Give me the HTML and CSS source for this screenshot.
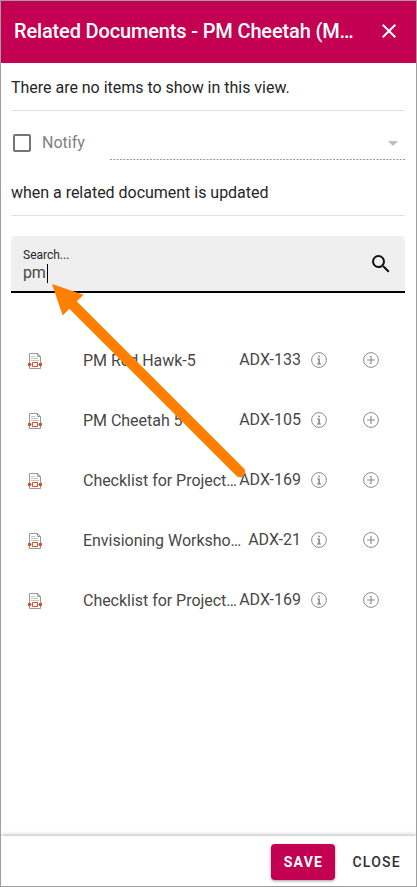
FILE: index.html
```html
<!DOCTYPE html>
<html lang="en">
<head>
<meta charset="utf-8">
<title>Related Documents</title>
<link rel="stylesheet" href="styles.css">
</head>
<body>
<svg class="defs" width="0" height="0">
  <symbol id="doc" viewBox="0 0 14 16">
    <path d="M1.5 .5h8l3 3v12h-11z" fill="#fff" stroke="#979797"/>
    <path d="M9.5 .5v3h3" fill="none" stroke="#979797"/>
    <path d="M3 3.5h4M3 5.5h7M3 7.5h8" stroke="#c4c4c4"/>
    <path d="M0 11.5h14" stroke="#d9a699"/>
    <path d="M0 10h3v3H0zM11 10h3v3h-3z" fill="#d35230"/>
    <path d="M4.5 9.5h5v4h-5z" fill="#fff" stroke="#d35230"/>
  </symbol>
  <symbol id="info" viewBox="0 0 16 16">
    <circle cx="8" cy="8" r="7.4" fill="none" stroke="#8c8c8c" stroke-width="1"/>
    <path d="M7.3 3.8h1.5v1.5H7.3zM6.2 6.5h2.6v5h1.2v.9H6.1v-.9h1.3V7.4H6.2z" fill="#777"/>
  </symbol>
  <symbol id="add" viewBox="0 0 16 16">
    <circle cx="8" cy="8" r="7.4" fill="none" stroke="#8c8c8c" stroke-width="1"/>
    <path d="M4 8h8M8 4v8" stroke="#8c8c8c" stroke-width="1.2"/>
  </symbol>
</svg>
<div class="panel">
  <header class="header">
    <h1 class="title">Related Documents - PM Cheetah (M…</h1>
    <svg class="close-icon" viewBox="0 0 24 24"><path d="M19 6.41 17.59 5 12 10.59 6.41 5 5 6.41 10.59 12 5 17.59 6.41 19 12 13.41 17.59 19 19 17.59 13.41 12z"/></svg>
  </header>
  <main class="content">
    <p class="line first">There are no items to show in this view.</p>
    <div class="notify">
      <span class="checkbox"></span>
      <span class="notify-label">Notify</span>
      <div class="select"><svg class="caret" viewBox="0 0 10 5"><path d="M0 0h10L5 5z"/></svg>
        <svg class="dots" width="295" height="1"><path d="M0 .5h295"/></svg>
      </div>
    </div>
    <p class="line second">when a related document is updated</p>
    <div class="search">
      <div class="field">
        <span class="search-label">Search...</span>
        <span class="search-value">pm<i class="cursor"></i></span>
      </div>
      <svg class="search-icon" viewBox="0 0 24 24"><path d="M15.5 14h-.79l-.28-.27A6.47 6.47 0 0 0 16 9.500 6.500 6.500 0 1 0 9.500 16c1.610 0 3.090-.59 4.230-1.570l.27.28v.79l5 4.990L20.490 19zm-6 0C7.010 14 5 11.990 5 9.500S7.010 5 9.500 5 14 7.010 14 9.500 11.990 14 9.500 14"/></svg>
    </div>
    <ul class="list">
      <li class="row"><svg class="doc"><use href="#doc"/></svg><span class="name">PM Red Hawk-5</span><span class="code">ADX-133</span><svg class="info"><use href="#info"/></svg><svg class="add"><use href="#add"/></svg></li>
      <li class="row"><svg class="doc"><use href="#doc"/></svg><span class="name">PM Cheetah 5</span><span class="code">ADX-105</span><svg class="info"><use href="#info"/></svg><svg class="add"><use href="#add"/></svg></li>
      <li class="row"><svg class="doc"><use href="#doc"/></svg><span class="name">Checklist for Project…</span><span class="code">ADX-169</span><svg class="info"><use href="#info"/></svg><svg class="add"><use href="#add"/></svg></li>
      <li class="row"><svg class="doc"><use href="#doc"/></svg><span class="name">Envisioning Worksho…</span><span class="code">ADX-21</span><svg class="info"><use href="#info"/></svg><svg class="add"><use href="#add"/></svg></li>
      <li class="row"><svg class="doc"><use href="#doc"/></svg><span class="name">Checklist for Project…</span><span class="code">ADX-169</span><svg class="info"><use href="#info"/></svg><svg class="add"><use href="#add"/></svg></li>
    </ul>
  </main>
  <footer class="footer">
    <button class="btn save">SAVE</button>
    <button class="btn close">CLOSE</button>
  </footer>
  <svg class="arrow" viewBox="0 0 200 200"><path d="M20 20 188 188" stroke="#ff8000" stroke-width="10.500" stroke-linecap="round"/><path d="M0 0 31.500 10.700 10.700 31.500z" fill="#ff8000"/></svg>
</div>
</body>
</html>
```
FILE: styles.css
```css
* { box-sizing: border-box; }
body { margin: 0; font-family: Roboto, "Liberation Sans", sans-serif; font-size: 16px; color: #262626; background: #fff; }
svg { display: block; flex: none; }
.defs { position: absolute; }
.panel { position: relative; display: flex; flex-direction: column; width: 417px; height: 887px; border: 1px solid #9e9e9e; overflow: hidden; }
.header { display: flex; align-items: center; justify-content: space-between; height: 62px; padding: 0 15px 2px 13px; background: #c30052; color: #fff; }
.title { margin: 0; font-size: 20px; font-weight: 500; line-height: 28px; letter-spacing: -.15px; white-space: nowrap; }
.close-icon { width: 24px; height: 24px; fill: #fff; }
.content { flex: 1; padding: 0 11px 0 10px; }
.line { margin: 0; line-height: 24px; border-bottom: 1px solid #e0e0e0; letter-spacing: -.02px; }
.first { height: 48px; padding-top: 13px; }
.second { height: 56px; padding-top: 21px; }
.notify { display: flex; height: 49px; align-items: flex-start; color: #808080; }
.checkbox { width: 18px; height: 18px; margin: 23px 0 0 2px; border: 2px solid #757575; border-radius: 2px; }
.notify-label { width: 68px; margin: 20px 0 0 11px; line-height: 24px; }
.select { display: flex; flex-direction: column; align-items: flex-end; justify-content: space-between; height: 49px; width: 295px; padding-top: 30px; }
.caret { width: 10px; height: 5px; margin-right: 7px; fill: #bdbdbd; }
.dots { stroke: #999; stroke-dasharray: 2 1.330; }
.search { display: flex; align-items: center; justify-content: space-between; height: 57px; margin-top: 20px; padding: 0 12px; background: #efefef; border-bottom: 2px solid #000; border-radius: 4px 4px 0 0; }
.field { display: flex; flex-direction: column; padding-top: 2px; }
.search-label { font-size: 12px; line-height: 16px; padding-top: 1px; }
.search-value { display: flex; align-items: center; line-height: 20px; color: #484848; letter-spacing: -.2px; }
.cursor { width: 1px; height: 19px; margin-left: 1px; background: #000; }
.search-icon { width: 24px; height: 24px; fill: #111; }
.list { list-style: none; margin: 37px 0 0; padding: 0; color: #484848; }
.row { display: flex; align-items: center; height: 60px; }
.doc { width: 14px; height: 16px; margin: 2px 41px 0 17px; }
.name { flex: 1; min-width: 0; line-height: 24px; padding-top: 2px; letter-spacing: -.03px; white-space: nowrap; }
.code { line-height: 24px; margin-top: -1px; }
.info { width: 16px; height: 16px; margin-left: 10px; }
.add { width: 16px; height: 16px; margin: 0 26px 0 36px; }
.footer { display: flex; justify-content: flex-end; height: 50px; padding: 8px 15px 0 0; gap: 17px; background: #fff; box-shadow: 0 -1px 4px rgba(0,0,0,.28); }
.btn { height: 36px; padding: 0; border: 0; border-radius: 4px; background: none; font: 500 14px Roboto, sans-serif; letter-spacing: 1.250px; color: #303030; }
.save { width: 64px; font-weight: 700; background: #c30052; color: #fff; box-shadow: 0 1px 3px rgba(0,0,0,.4); }
.arrow { position: absolute; left: 51px; top: 283px; width: 200px; height: 200px; }
```
